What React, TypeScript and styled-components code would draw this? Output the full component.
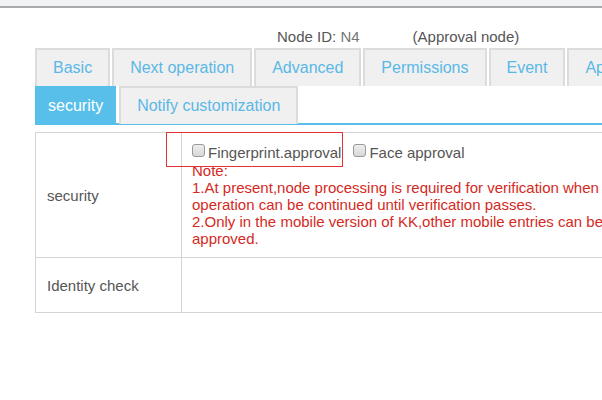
import React from 'react';
import styled, { createGlobalStyle } from 'styled-components';

const GlobalStyle = createGlobalStyle`
  html, body {
    margin: 0;
    padding: 0;
    background: #fff;
    overflow: hidden;
    font-family: "Liberation Sans", Arial, sans-serif;
  }
`;

const TopStrip = styled.div`
  height: 6px;
  background: #f1f2f4;
  border-bottom: 2px solid #aaa;
`;

const Page = styled.div`
  width: 720px;
  padding-left: 35px;
`;

const Header = styled.div`
  display: flex;
  height: 40px;
  align-items: flex-end;
  padding-left: 242px;
  font-size: 15px;
  color: #555;
  line-height: 18px;
  padding-bottom: 2px;
  box-sizing: border-box;
`;

const NodeId = styled.span`
  color: #777;
`;

const NodeType = styled.span`
  margin-left: 53px;
`;

const TabRow = styled.div`
  display: flex;
  gap: 2px;
`;

const Tab = styled.div<{ $active?: boolean; $pad?: number }>`
  height: ${({ $active }) => ($active ? '37px' : '38px')};
  box-sizing: border-box;
  padding: 0 ${({ $pad }) => $pad ?? 16}px;
  display: flex;
  align-items: center;
  font-size: 16px;
  color: ${({ $active }) => ($active ? '#fff' : '#5ab8e6')};
  background: ${({ $active }) => ($active ? '#58bfeb' : '#f0f0f0')};
  border: 2px solid ${({ $active }) => ($active ? '#58bfeb' : '#dcdcdc')};
  border-bottom: none;
  white-space: nowrap;
`;

const SubRow = styled(TabRow)`
  gap: 3px;
  border-bottom: 2px solid #58bfeb;
  height: 37px;
  align-items: flex-start;
`;

const Table = styled.div`
  margin-top: 7px;
  display: grid;
  grid-template-columns: 146px 1fr;
  border: 1px solid #d4d4d4;
  border-bottom: none;
`;

const LabelCell = styled.div<{ $h: number }>`
  height: ${({ $h }) => $h}px;
  display: flex;
  align-items: center;
  padding-left: 11px;
  font-size: 15px;
  color: #555;
  border-right: 1px solid #d4d4d4;
  border-bottom: 1px solid #d4d4d4;
`;

const ValueCell = styled.div`
  position: relative;
  padding: 9px 10px 0;
  border-bottom: 1px solid #d4d4d4;
`;

const Options = styled.div`
  display: flex;
  align-items: center;
  gap: 12px;
  height: 20px;
`;

const Option = styled.label`
  display: flex;
  align-items: center;
  font-size: 15px;
  color: #555;
  white-space: nowrap;
`;

const Box = styled.span`
  width: 13px;
  height: 13px;
  box-sizing: border-box;
  border: 1px solid #999;
  border-radius: 3px;
  background: linear-gradient(#eee, #d8d8d8);
  margin-right: 3px;
  margin-top: -4px;
`;

const Highlight = styled.div`
  position: absolute;
  left: -16px;
  top: -1px;
  width: 177px;
  height: 35px;
  box-sizing: border-box;
  border: 1px solid #e53333;
`;

const Note = styled.div`
  color: #d42a1e;
  font-size: 15px;
  line-height: 17px;
  width: 420px;
`;

export default function App() {
  return (
    <>
      <GlobalStyle />
      <TopStrip />
      <Page>
        <Header>
          <span>
            Node ID: <NodeId>N4</NodeId>
          </span>
          <NodeType>(Approval node)</NodeType>
        </Header>
        <TabRow>
          <Tab>Basic</Tab>
          <Tab>Next operation</Tab>
          <Tab>Advanced</Tab>
          <Tab>Permissions</Tab>
          <Tab>Event</Tab>
          <Tab>Approval</Tab>
        </TabRow>
        <SubRow>
          <Tab $active $pad={11}>
            security
          </Tab>
          <Tab $pad={16}>Notify customization</Tab>
        </SubRow>
        <Table>
          <LabelCell $h={124}>security</LabelCell>
          <ValueCell>
            <Highlight />
            <Options>
              <Option>
                <Box />
                Fingerprint.approval
              </Option>
              <Option>
                <Box />
                Face approval
              </Option>
            </Options>
            <Note>
              Note:
              <br />
              1.At present,node processing is required for verification when operation can be continued until
              verification passes.
              <br />
              2.Only in the mobile version of KK,other mobile entries can be approved.
            </Note>
          </ValueCell>
          <LabelCell $h={54}>Identity check</LabelCell>
          <ValueCell />
        </Table>
      </Page>
    </>
  );
}
